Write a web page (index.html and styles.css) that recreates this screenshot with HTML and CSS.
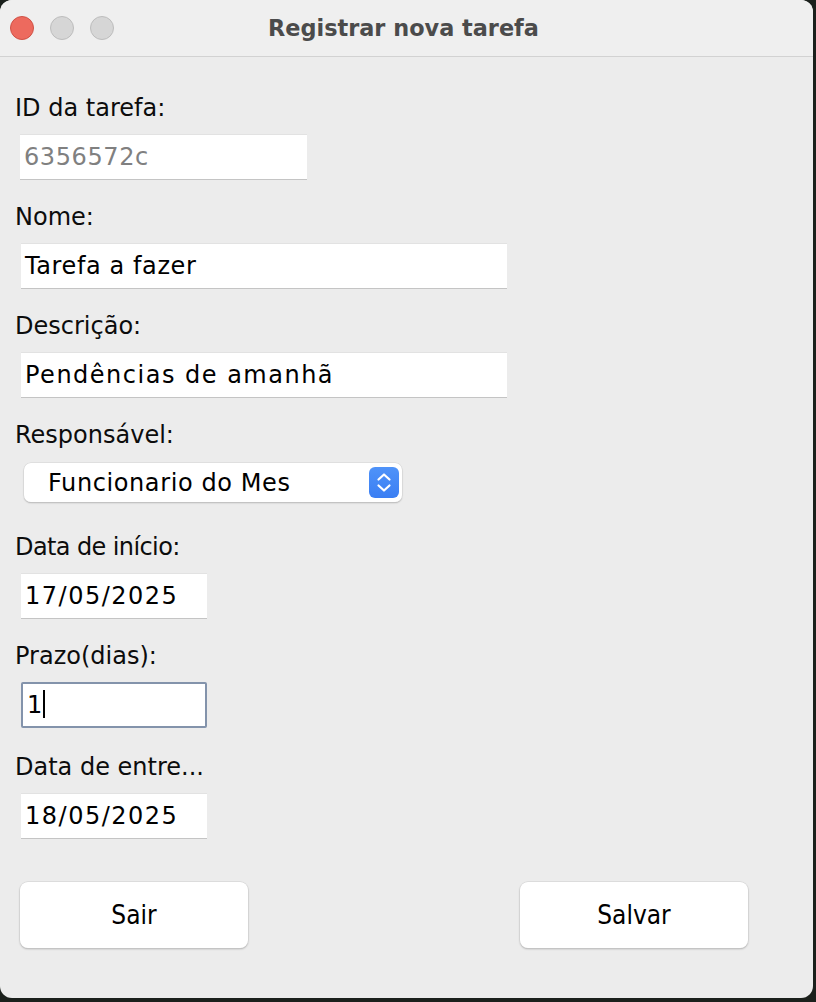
FILE: index.html
```html
<!DOCTYPE html>
<html lang="pt">
<head>
<meta charset="utf-8">
<title>Registrar nova tarefa</title>
<link rel="stylesheet" href="styles.css">
</head>
<body>
<div class="window">
  <div class="titlebar">
    <div class="lights">
      <span class="light red"></span>
      <span class="light gray"></span>
      <span class="light gray"></span>
    </div>
    <div class="title">Registrar nova tarefa</div>
  </div>
  <div class="content">
    <div class="group">
      <div class="label">ID da tarefa:</div>
      <div class="field w-id disabled sp-id">6356572c</div>
    </div>
    <div class="group">
      <div class="label">Nome:</div>
      <div class="field w-long sp-name">Tarefa a fazer</div>
    </div>
    <div class="group">
      <div class="label">Descrição:</div>
      <div class="field w-long sp-desc">Pendências de amanhã</div>
    </div>
    <div class="group group-select">
      <div class="label">Responsável:</div>
      <div class="select">
        <span class="select-text">Funcionario do Mes</span>
        <span class="select-arrow">
          <svg width="30" height="31" viewBox="0 0 30 31">
            <path d="M9.5 12.5 L15 7.5 L20.5 12.5" fill="none" stroke="#fff" stroke-width="2.2" stroke-linecap="round" stroke-linejoin="round"/>
            <path d="M9.5 18.5 L15 23.5 L20.5 18.5" fill="none" stroke="#fff" stroke-width="2.2" stroke-linecap="round" stroke-linejoin="round"/>
          </svg>
        </span>
      </div>
    </div>
    <div class="group">
      <div class="label label-tight">Data de início:</div>
      <div class="field w-short sp-date">17/05/2025</div>
    </div>
    <div class="group group-prazo">
      <div class="label">Prazo(dias):</div>
      <div class="field w-short focused">1<span class="caret"></span></div>
    </div>
    <div class="group">
      <div class="label">Data de entre...</div>
      <div class="field w-short sp-date">18/05/2025</div>
    </div>
    <div class="buttons">
      <div class="button">Sair</div>
      <div class="button">Salvar</div>
    </div>
  </div>
</div>
</body>
</html>
```

FILE: styles.css
```css
html, body {
  margin: 0;
  padding: 0;
  background: #1b201c;
}
body {
  width: 816px;
  height: 1002px;
  overflow: hidden;
  font-family: "DejaVu Sans", "Noto Sans", sans-serif;
}
.window {
  width: 813px;
  height: 998px;
  background: #ececec;
  border-radius: 12px;
  overflow: hidden;
  display: flex;
  flex-direction: column;
}
.titlebar {
  height: 56px;
  flex: none;
  background: #efefef;
  border-bottom: 1px solid #d2d2d2;
  display: flex;
  align-items: center;
  position: relative;
}
.lights {
  display: flex;
  gap: 16px;
  padding-left: 10px;
  position: relative;
  z-index: 1;
}
.light {
  width: 22px;
  height: 22px;
  border-radius: 50%;
  border: 1px solid #bdbdbd;
  background: #d6d6d6;
}
.light.red {
  background: #ed6a5e;
  border-color: #d05246;
}
.title {
  position: absolute;
  left: 0;
  right: 0;
  top: 0;
  bottom: 0;
  display: flex;
  align-items: center;
  justify-content: center;
  font-weight: bold;
  font-size: 22.4px;
  color: #4b4b4b;
  padding-right: 6px;
}
.content {
  padding: 36px 0 0 15px;
  display: flex;
  flex-direction: column;
}
.group {
  display: flex;
  flex-direction: column;
  align-items: flex-start;
  margin-bottom: 23px;
}
.group-prazo {
  margin-bottom: 24px;
}
.label {
  height: 30px;
  line-height: 30px;
  font-size: 24px;
  color: #0c0c0c;
  margin-bottom: 11px;
}
.label-tight {
  letter-spacing: -0.6px;
}
.field {
  box-sizing: border-box;
  height: 45px;
  line-height: 45px;
  background: #fff;
  margin-left: 6px;
  padding-left: 4px;
  font-size: 24px;
  color: #000;
  border-top: 1px solid #e2e2e2;
  box-shadow: 0 1px 0 #c4c4c4, 1px 0 0 #ececec;
  position: relative;
  white-space: nowrap;
}
.field.disabled {
  color: #808080;
  margin-left: 5px;
}
.sp-id { letter-spacing: 0.6px; }
.sp-name { letter-spacing: 0.6px; }
.sp-desc { letter-spacing: 1.5px; }
.sp-date { letter-spacing: 1.5px; }
.w-id { width: 287px; }
.w-long { width: 486px; }
.w-short { width: 186px; }
.field.focused {
  height: 46px;
  border: 2px solid #8393ab;
  border-radius: 2px;
  box-shadow: none;
  line-height: 42px;
  padding-left: 4px;
}
.caret {
  display: inline-block;
  width: 2px;
  height: 28px;
  background: #000;
  vertical-align: middle;
  margin-left: 1px;
  position: relative;
  top: -2px;
}
.select {
  box-sizing: border-box;
  margin-left: 9px;
  margin-top: 2px;
  margin-bottom: 7px;
  width: 378px;
  height: 39px;
  background: #fff;
  border-radius: 7px;
  box-shadow: 0 0 0 0.5px #d4d4d4, 0 1px 1.5px rgba(0,0,0,0.3);
  display: flex;
  align-items: center;
  justify-content: space-between;
  padding: 0 3px 0 24px;
}
.select-text {
  font-size: 24px;
  letter-spacing: 0.6px;
  color: #000;
}
.select-arrow {
  width: 30px;
  height: 31px;
  border-radius: 6px;
  background: linear-gradient(#4f93f9, #3a7ef3);
  display: flex;
}
.buttons {
  display: flex;
  justify-content: space-between;
  width: 728px;
  margin-left: 5px;
  margin-top: 21px;
}
.button {
  width: 228px;
  height: 66px;
  box-sizing: border-box;
  background: #fff;
  border-radius: 8px;
  box-shadow: 0 0 0 0.5px #d0d0d0, 0 1px 2px rgba(0,0,0,0.3);
  display: flex;
  align-items: center;
  justify-content: center;
  font-family: "DejaVu Sans Condensed", "DejaVu Sans", sans-serif;
  font-size: 26px;
  color: #000;
}
```
